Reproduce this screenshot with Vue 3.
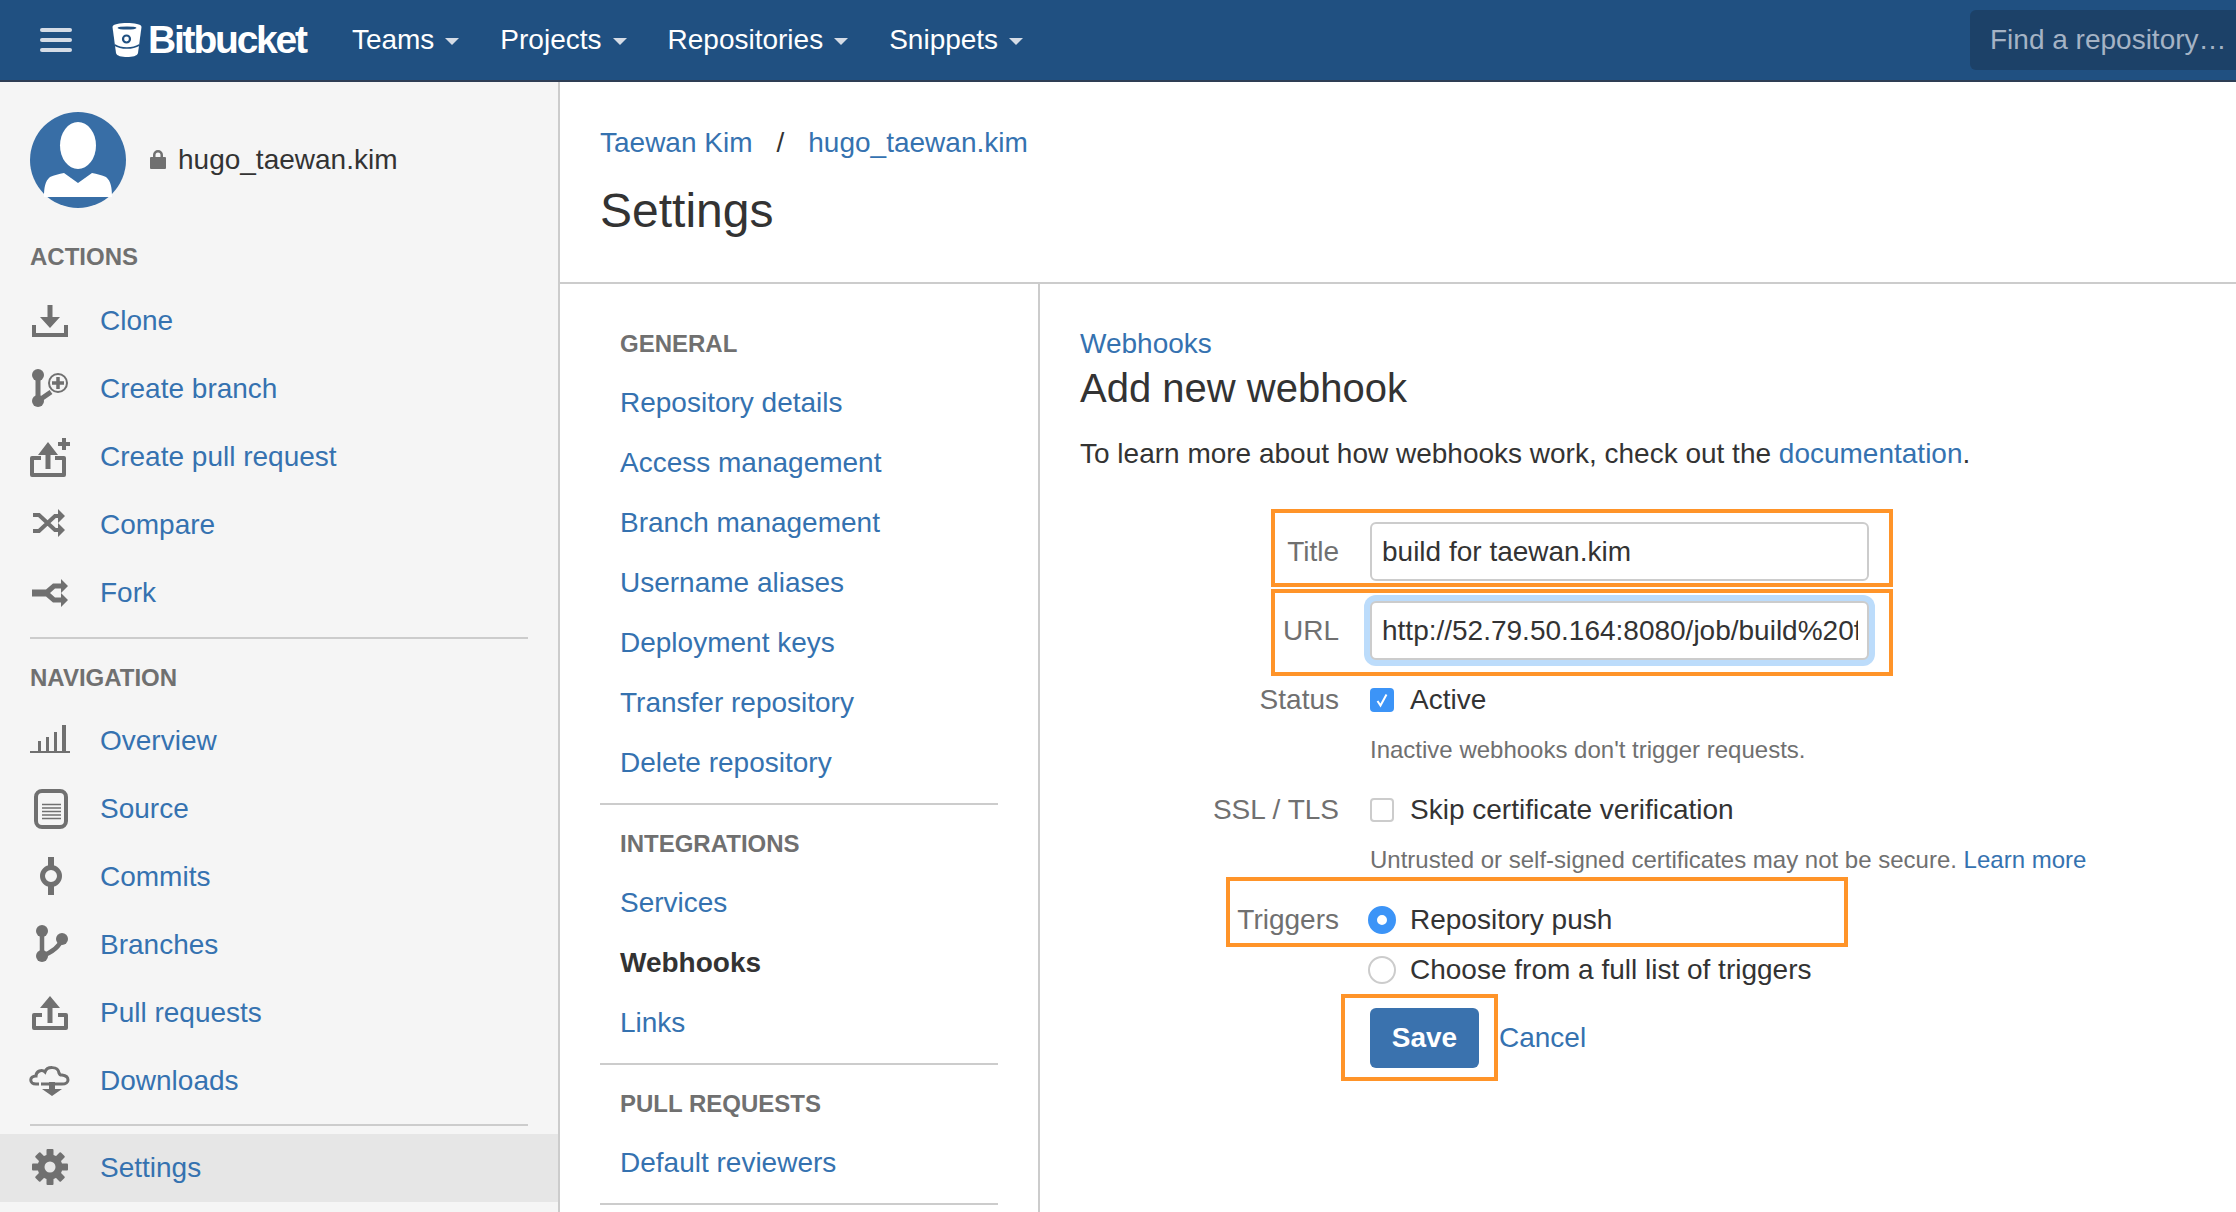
<script setup>
const navLinks = ['Teams', 'Projects', 'Repositories', 'Snippets']

const gearTeeth = [0, 45, 90, 135, 180, 225, 270, 315]
  .map(a => `<rect x="20.5" y="5" width="7" height="9" rx="1" transform="rotate(${a} 24 23)"/>`)
  .join('')

const icons = {
  clone: '<path d="M21.5 8h5v12H34L24 31 14 20h7.5z"/><path d="M8 28v10h32V28" fill="none" stroke="#707070" stroke-width="4"/>',
  branch: '<circle cx="12" cy="10" r="6"/><circle cx="12" cy="36" r="6"/><path d="M12 10v26l13-9" fill="none" stroke="#707070" stroke-width="5"/><circle cx="32" cy="18" r="9" fill="#f5f5f5" stroke="#707070" stroke-width="2"/><path d="M32 12v12M26 18h12" stroke="#707070" stroke-width="3.5"/>',
  pull: '<path d="M15 25H6v17h32V25h-9" fill="none" stroke="#707070" stroke-width="4" stroke-linejoin="round"/><path d="M22 9l10 13h-7.5v14h-5V22H12z"/><path d="M38 5v12M32 11h12" stroke="#707070" stroke-width="4"/>',
  compare: '<path d="M7 14h6l16 15h4M7 30h6l16-15h4" fill="none" stroke="#707070" stroke-width="4"/><path d="M32 8l7 7-7 7zM32 22l7 7-7 7z"/>',
  fork: '<path d="M6 20.5h14l7-6h9v5h-7l-5 4.500 5 4.500h7v5h-9l-7-6H6z"/><path d="M35 10l7 7-7 7zM35 24l7 7-7 7z"/>',
  overview: '<path d="M4 34h40v2H4zM12 24h3v10h-3zM20 20h3v14h-3zM28 15h3v19h-3zM36 8h4v26h-4z"/>',
  source: '<rect x="10" y="6" width="30" height="36" rx="6" fill="none" stroke="#707070" stroke-width="4"/><path d="M16 19.500h19M16 23h19M16 26.500h19M16 30h19M16 33.500h19" stroke="#707070" stroke-width="1.500"/>',
  commits: '<path d="M22 4h6v38h-6z"/><circle cx="25" cy="23" r="8.500" fill="#f5f5f5" stroke="#707070" stroke-width="5"/>',
  branches: '<circle cx="16" cy="10" r="6"/><circle cx="16" cy="35" r="6"/><circle cx="36" cy="18" r="6"/><path d="M16 10v25c8-3 17-8 20-17" fill="none" stroke="#707070" stroke-width="4.500"/>',
  pulls: '<path d="M16 26H8v13h32V26h-8" fill="none" stroke="#707070" stroke-width="4" stroke-linejoin="round"/><path d="M24 7l10 12h-7.500v15h-5V19H14z"/>',
  downloads: '<path d="M13 27H10c-7 0-7-8 0-8 0-5 6-7 9-4 2-6 13-6 14 1 1 2 1 2 3 2 8 1 8 9 0 9H15" fill="none" stroke="#707070" stroke-width="3"/><path d="M23 25h6v7h7l-10 7-10-7h7z"/>',
  settings: gearTeeth + '<circle cx="24" cy="23" r="12.500"/><circle cx="24" cy="23" r="5.500" fill="#e6e6e6"/>'
}

const actions = [
  { label: 'Clone', icon: 'clone' },
  { label: 'Create branch', icon: 'branch' },
  { label: 'Create pull request', icon: 'pull' },
  { label: 'Compare', icon: 'compare' },
  { label: 'Fork', icon: 'fork' }
]

const navigation = [
  { label: 'Overview', icon: 'overview' },
  { label: 'Source', icon: 'source' },
  { label: 'Commits', icon: 'commits' },
  { label: 'Branches', icon: 'branches' },
  { label: 'Pull requests', icon: 'pulls' },
  { label: 'Downloads', icon: 'downloads' }
]

const settingsNav = [
  { title: 'GENERAL', links: ['Repository details', 'Access management', 'Branch management', 'Username aliases', 'Deployment keys', 'Transfer repository', 'Delete repository'] },
  { title: 'INTEGRATIONS', links: ['Services', 'Webhooks', 'Links'] },
  { title: 'PULL REQUESTS', links: ['Default reviewers'] }
]
</script>

<template>
  <div class="page">
    <header class="topbar">
      <div class="burger"><span></span><span></span><span></span></div>
      <div class="brand">
        <svg class="bucket" width="30" height="34" viewBox="0 0 30 34">
          <path fill="#fff" d="M0.500 4C0.500 1 8 0 15 0s14.500 1 14.500 4L26 30c-0.500 3-6 4-11 4s-10.500-1-11-4z" />
          <ellipse cx="15" cy="5" rx="9.500" ry="1.600" fill="#205081" />
          <circle cx="14.500" cy="16" r="3.500" fill="#fff" stroke="#205081" stroke-width="2.200" />
          <path d="M2.800 22c6 4 18 4 24.400 0" fill="none" stroke="#205081" stroke-width="1.600" />
        </svg>
        <span class="brand-name">Bitbucket</span>
      </div>
      <nav class="topnav">
        <a v-for="link in navLinks" :key="link" class="topnav-link">{{ link }}<i class="caret"></i></a>
      </nav>
      <div class="search">Find a repository…</div>
    </header>

    <div class="body">
      <aside class="sidebar">
        <div class="repo">
          <svg class="avatar" width="96" height="96" viewBox="0 0 96 96">
            <circle cx="48" cy="48" r="48" fill="#386ea6" />
            <ellipse cx="48" cy="33.500" rx="18" ry="23.500" fill="#fff" />
            <path fill="#fff" d="M14 85c0-9 1-16 6-20 4-2 9-3 14-4l14 10 14-10c5 1 10 2 14 4 5 4 6 11 6 20z" />
          </svg>
          <svg class="lock" width="16" height="20" viewBox="0 0 16 20">
            <path fill="#707070" d="M3 8V6a5 5 0 0 1 10 0v2h2a1 1 0 0 1 1 1v10a1 1 0 0 1-1 1H1a1 1 0 0 1-1-1V9a1 1 0 0 1 1-1zm2.500 0h5V6a2.500 2.500 0 0 0-5 0z" />
          </svg>
          <span class="repo-name">hugo_taewan.kim</span>
        </div>

        <h4 class="side-title side-title-first">ACTIONS</h4>
        <a v-for="item in actions" :key="item.label" class="side-item">
          <svg class="side-icon" width="48" height="48" viewBox="0 0 48 48" fill="#707070" v-html="icons[item.icon]"></svg>
          {{ item.label }}
        </a>
        <div class="side-line"></div>

        <h4 class="side-title">NAVIGATION</h4>
        <a v-for="item in navigation" :key="item.label" class="side-item">
          <svg class="side-icon" width="48" height="48" viewBox="0 0 48 48" fill="#707070" v-html="icons[item.icon]"></svg>
          {{ item.label }}
        </a>
        <div class="side-line side-line-last"></div>

        <a class="side-item side-item-active">
          <svg class="side-icon" width="48" height="48" viewBox="0 0 48 48" fill="#707070" v-html="icons.settings"></svg>
          Settings
        </a>
      </aside>

      <main class="main">
        <div class="page-head">
          <div class="crumbs">
            <a>Taewan Kim</a><span class="crumb-sep">/</span><a>hugo_taewan.kim</a>
          </div>
          <h1>Settings</h1>
        </div>

        <div class="columns">
          <nav class="subnav">
            <section v-for="group in settingsNav" :key="group.title" class="subnav-group">
              <h4>{{ group.title }}</h4>
              <a v-for="link in group.links" :key="link" :class="{ current: link === 'Webhooks' }">{{ link }}</a>
            </section>
          </nav>

          <div class="content">
            <a class="back-link">Webhooks</a>
            <h2>Add new webhook</h2>
            <p class="intro">To learn more about how webhooks work, check out the <a>documentation</a>.</p>

            <form class="form" @submit.prevent>
              <div class="row row-title">
                <label>Title</label>
                <input type="text" value="build for taewan.kim" />
              </div>
              <div class="row row-url">
                <label>URL</label>
                <input class="focused" type="text" value="http://52.79.50.164:8080/job/build%20for%20taewan.kim/build" />
              </div>
              <div class="row row-status">
                <label>Status</label>
                <span class="check checked">
                  <svg width="14" height="16" viewBox="0 0 14 16"><path d="M2.500 9l3 4.500L11.500 2.500" fill="none" stroke="#fff" stroke-width="2" /></svg>
                </span>
                <span class="option">Active</span>
              </div>
              <div class="hint hint-status">Inactive webhooks don't trigger requests.</div>
              <div class="row row-ssl">
                <label>SSL / TLS</label>
                <span class="check"></span>
                <span class="option">Skip certificate verification</span>
              </div>
              <div class="hint hint-ssl">Untrusted or self-signed certificates may not be secure. <a>Learn more</a></div>
              <div class="row row-push">
                <label>Triggers</label>
                <span class="radio selected"></span>
                <span class="option">Repository push</span>
              </div>
              <div class="row row-choose">
                <label></label>
                <span class="radio"></span>
                <span class="option">Choose from a full list of triggers</span>
              </div>
              <div class="row row-buttons">
                <label></label>
                <button type="submit" class="save">Save</button>
                <a class="cancel">Cancel</a>
              </div>
            </form>
          </div>
        </div>
      </main>
    </div>

    <div class="mark mark-title"></div>
    <div class="mark mark-url"></div>
    <div class="mark mark-triggers"></div>
    <div class="mark mark-save"></div>
  </div>
</template>

<style>
html, body {
  margin: 0;
  overflow: hidden;
}
</style>

<style scoped>
.page {
  position: relative;
  width: 2236px;
  height: 1212px;
  overflow: hidden;
  font-family: "Liberation Sans", Arial, sans-serif;
  font-size: 28px;
  color: #333;
  background: #fff;
}
a {
  color: #3572b0;
  text-decoration: none;
}

.topbar {
  display: flex;
  align-items: center;
  height: 80px;
  background: #205081;
  border-bottom: 2px solid #2e3d54;
  color: #fff;
}
.burger {
  display: flex;
  flex-direction: column;
  gap: 5.500px;
  width: 32px;
  margin-left: 40px;
}
.burger span {
  height: 4.500px;
  border-radius: 2px;
  background: #d5dce6;
}
.brand {
  display: flex;
  align-items: center;
  gap: 6px;
  margin-left: 40px;
}
.brand-name {
  font-size: 39px;
  font-weight: bold;
  letter-spacing: -2.200px;
}
.topnav {
  display: flex;
  gap: 41px;
  margin-left: 46px;
}
.topnav-link {
  display: flex;
  align-items: center;
  color: #fff;
}
.caret {
  margin-left: 11px;
  margin-top: 2px;
  border-left: 7.500px solid transparent;
  border-right: 7.500px solid transparent;
  border-top: 7.500px solid #d5dce6;
}
.search {
  display: flex;
  align-items: center;
  margin-left: auto;
  width: 246px;
  height: 60px;
  padding-left: 20px;
  border-radius: 6px 0 0 6px;
  background: #1c4168;
  color: #a5b3c5;
  white-space: nowrap;
  overflow: hidden;
}

.body {
  display: flex;
  height: 1130px;
}
.sidebar {
  flex: none;
  box-sizing: border-box;
  width: 560px;
  padding-top: 30px;
  background: #f5f5f5;
  border-right: 2px solid #ccc;
}
.repo {
  display: flex;
  align-items: center;
  margin-left: 30px;
}
.lock {
  margin-left: 24px;
  margin-right: 12px;
  margin-top: -2px;
}
.side-title {
  margin: 0 0 12px 30px;
  font-size: 24px;
  line-height: 34px;
  font-weight: bold;
  color: #707070;
}
.side-title-first {
  margin-top: 32px;
  margin-bottom: 13px;
}
.side-item {
  display: flex;
  align-items: center;
  height: 68px;
  padding-left: 26px;
}
.side-icon {
  flex: none;
  margin-right: 26px;
}
.side-line {
  height: 2px;
  margin: 10px 30px 22px;
  background: #ccc;
}
.side-line-last {
  margin: 9px 30px 8px;
}
.side-item-active {
  background: #e6e6e6;
}

.main {
  flex: 1;
  display: flex;
  flex-direction: column;
}
.page-head {
  flex: none;
  box-sizing: border-box;
  height: 202px;
  padding: 43px 0 0 40px;
  border-bottom: 2px solid #ccc;
}
.crumbs {
  line-height: 36px;
}
.crumb-sep {
  margin: 0 24px;
}
h1 {
  margin: 22px 0 0;
  font-size: 48px;
  line-height: 56px;
  font-weight: normal;
}
.columns {
  flex: 1;
  display: flex;
  min-height: 0;
}
.subnav {
  flex: none;
  box-sizing: border-box;
  width: 480px;
  padding: 31px 40px 0 40px;
  border-right: 2px solid #ccc;
}
.subnav-group {
  padding-bottom: 10px;
  margin-bottom: 10px;
  border-bottom: 2px solid #ccc;
}
.subnav-group h4 {
  margin: 0;
  padding-left: 20px;
  font-size: 24px;
  line-height: 58px;
  font-weight: bold;
  color: #707070;
}
.subnav-group a {
  display: block;
  padding-left: 20px;
  line-height: 60px;
}
.subnav-group a.current {
  color: #333;
  font-weight: bold;
}

.content {
  flex: 1;
  padding: 43px 0 0 40px;
}
.back-link {
  display: block;
  line-height: 34px;
}
h2 {
  margin: 4px 0 0;
  font-size: 40px;
  line-height: 46px;
  font-weight: normal;
}
.intro {
  margin: 23px 0 0;
  line-height: 40px;
}
.row {
  display: flex;
  align-items: center;
}
.row label {
  flex: none;
  width: 259px;
  margin-right: 31px;
  text-align: right;
  color: #707070;
}
.form {
  margin-top: 48px;
}
.row input {
  box-sizing: border-box;
  width: 499px;
  height: 59px;
  padding: 0 9px 0 10px;
  border: 2px solid #ccc;
  border-radius: 6px;
  outline: none;
  font: inherit;
  color: #333;
}
.row input.focused {
  box-shadow: 0 0 0 6px #bcdcfb;
}
.row-url {
  margin-top: 20px;
}
.row-status {
  margin-top: 25px;
  height: 30px;
}
.check {
  box-sizing: border-box;
  display: flex;
  align-items: center;
  justify-content: center;
  width: 24px;
  height: 24px;
  margin-right: 16px;
  border: 2px solid #ccc;
  border-radius: 4px;
  background: #fff;
}
.check.checked {
  border: 0;
  background: #3c94f7;
}
.radio {
  box-sizing: border-box;
  flex: none;
  width: 28px;
  height: 28px;
  margin-left: -2px;
  margin-right: 14px;
  border: 2px solid #ccc;
  border-radius: 50%;
  background: #fff;
}
.radio.selected {
  border: 9px solid #3c94f7;
}
.hint {
  margin-left: 290px;
  font-size: 24px;
  line-height: 34px;
  color: #707070;
}
.hint-status {
  margin-top: 18px;
}
.row-ssl {
  margin-top: 28px;
  height: 30px;
}
.hint-ssl {
  margin-top: 18px;
}
.row-push {
  margin-top: 28px;
  height: 30px;
}
.row-choose {
  margin-top: 20px;
  height: 30px;
}
.row-buttons {
  margin-top: 23px;
}
.save {
  width: 109px;
  height: 60px;
  padding: 0;
  border: 0;
  border-radius: 6px;
  background: #3a72ae;
  color: #fff;
  font: inherit;
  font-weight: bold;
}
.cancel {
  margin-left: 20px;
}

/* orange annotation boxes drawn over the screenshot */
.mark {
  position: absolute;
  box-sizing: border-box;
  border: 4px solid #ff9429;
}
.mark-title {
  left: 1271px;
  top: 509px;
  width: 622px;
  height: 78px;
}
.mark-url {
  left: 1271px;
  top: 589px;
  width: 622px;
  height: 87px;
}
.mark-triggers {
  left: 1226px;
  top: 877px;
  width: 622px;
  height: 70px;
}
.mark-save {
  left: 1341px;
  top: 994px;
  width: 157px;
  height: 87px;
}
</style>
